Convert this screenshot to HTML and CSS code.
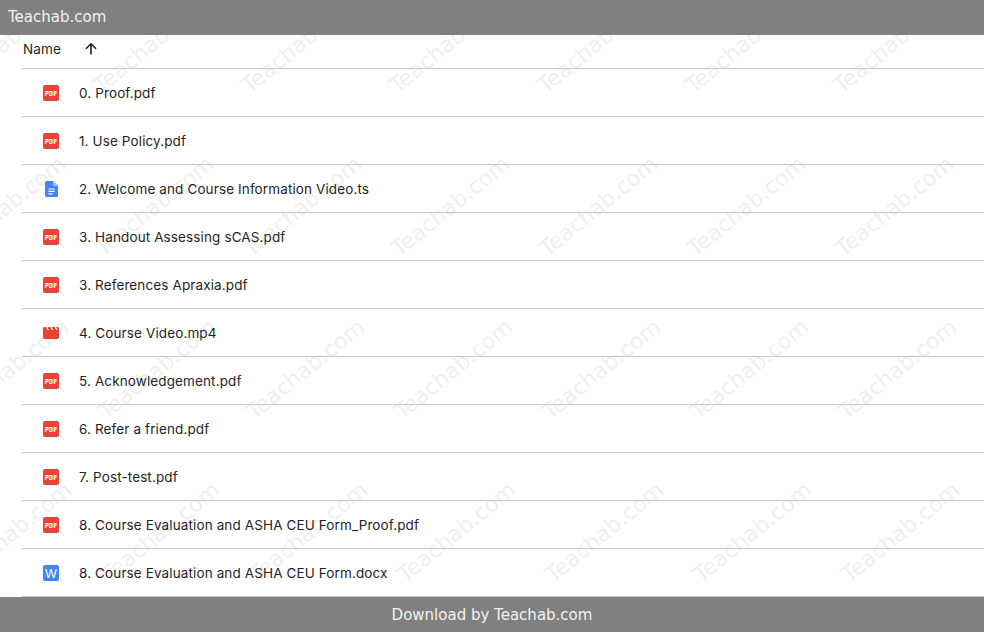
FILE: index.html
```html
<!DOCTYPE html>
<html lang="en">

<head>
    <meta charset="UTF-8">
    <meta name="viewport" content="width=device-width, initial-scale=1.0">
    <title>Teachab.com</title>
    <link rel="stylesheet" href="styles.css">
</head>

<body>

<div class="page">
    <div class="top-bar">Teachab.com</div>

    <div class="file-list">
        <!-- Watermark sits behind the rows -->
        <div class="watermarks">
            <div class="wm-row wm-row-a"><span>Teachab.com</span><span>Teachab.com</span><span>Teachab.com</span><span>Teachab.com</span><span>Teachab.com</span><span>Teachab.com</span><span>Teachab.com</span></div>
            <div class="wm-row wm-row-b"><span>Teachab.com</span><span>Teachab.com</span><span>Teachab.com</span><span>Teachab.com</span><span>Teachab.com</span><span>Teachab.com</span><span>Teachab.com</span></div>
            <div class="wm-row wm-row-c"><span>Teachab.com</span><span>Teachab.com</span><span>Teachab.com</span><span>Teachab.com</span><span>Teachab.com</span><span>Teachab.com</span><span>Teachab.com</span></div>
            <div class="wm-row wm-row-d"><span>Teachab.com</span><span>Teachab.com</span><span>Teachab.com</span><span>Teachab.com</span><span>Teachab.com</span><span>Teachab.com</span><span>Teachab.com</span></div>
        </div>

        <div class="list-head">
            <span>Name</span>
            <svg class="sort-arrow" viewBox="0 0 16 16"><path d="M8 13.500V2.800M3 7.800L8 2.800l5 5" fill="none" stroke="#1f1f1f" stroke-width="1.600"/></svg>
        </div>

        <div class="file-row">
            <svg class="file-icon" viewBox="0 0 16 16"><rect width="16" height="16" rx="2" fill="#ea4335"/><text x="1.800" y="10.600" textLength="12.400" lengthAdjust="spacingAndGlyphs" class="pdf-label">PDF</text></svg>
            <span>0. Proof.pdf</span>
        </div>
        <div class="file-row">
            <svg class="file-icon" viewBox="0 0 16 16"><rect width="16" height="16" rx="2" fill="#ea4335"/><text x="1.800" y="10.600" textLength="12.400" lengthAdjust="spacingAndGlyphs" class="pdf-label">PDF</text></svg>
            <span>1. Use Policy.pdf</span>
        </div>
        <div class="file-row">
            <svg class="file-icon" viewBox="0 0 16 16"><path d="M3.500 0H10l5 5v9.500a1.500 1.500 0 0 1-1.500 1.500h-10A1.500 1.500 0 0 1 2 14.500V1.500A1.500 1.500 0 0 1 3.500 0z" fill="#4285f4"/><path d="M10 0v4a1 1 0 0 0 1 1h4z" fill="#a1c2fa"/><path d="M5.500 8h6M5.500 10.400h6M5.500 12.800h4" stroke="#fff" stroke-width="1.200"/></svg>
            <span>2. Welcome and Course Information Video.ts</span>
        </div>
        <div class="file-row">
            <svg class="file-icon" viewBox="0 0 16 16"><rect width="16" height="16" rx="2" fill="#ea4335"/><text x="1.800" y="10.600" textLength="12.400" lengthAdjust="spacingAndGlyphs" class="pdf-label">PDF</text></svg>
            <span>3. Handout Assessing sCAS.pdf</span>
        </div>
        <div class="file-row">
            <svg class="file-icon" viewBox="0 0 16 16"><rect width="16" height="16" rx="2" fill="#ea4335"/><text x="1.800" y="10.600" textLength="12.400" lengthAdjust="spacingAndGlyphs" class="pdf-label">PDF</text></svg>
            <span>3. References Apraxia.pdf</span>
        </div>
        <div class="file-row">
            <svg class="file-icon" viewBox="0 0 16 16"><rect y="2" width="16" height="12" rx="1.500" fill="#ea4335"/><path d="M3 2h1.400l1.500 3H4.500zM7.300 2h1.400l1.500 3H8.800zM11.600 2H13l1.500 3h-1.400z" fill="#fff"/></svg>
            <span>4. Course Video.mp4</span>
        </div>
        <div class="file-row">
            <svg class="file-icon" viewBox="0 0 16 16"><rect width="16" height="16" rx="2" fill="#ea4335"/><text x="1.800" y="10.600" textLength="12.400" lengthAdjust="spacingAndGlyphs" class="pdf-label">PDF</text></svg>
            <span>5. Acknowledgement.pdf</span>
        </div>
        <div class="file-row">
            <svg class="file-icon" viewBox="0 0 16 16"><rect width="16" height="16" rx="2" fill="#ea4335"/><text x="1.800" y="10.600" textLength="12.400" lengthAdjust="spacingAndGlyphs" class="pdf-label">PDF</text></svg>
            <span>6. Refer a friend.pdf</span>
        </div>
        <div class="file-row">
            <svg class="file-icon" viewBox="0 0 16 16"><rect width="16" height="16" rx="2" fill="#ea4335"/><text x="1.800" y="10.600" textLength="12.400" lengthAdjust="spacingAndGlyphs" class="pdf-label">PDF</text></svg>
            <span>7. Post-test.pdf</span>
        </div>
        <div class="file-row">
            <svg class="file-icon" viewBox="0 0 16 16"><rect width="16" height="16" rx="2" fill="#ea4335"/><text x="1.800" y="10.600" textLength="12.400" lengthAdjust="spacingAndGlyphs" class="pdf-label">PDF</text></svg>
            <span>8. Course Evaluation and ASHA CEU Form_Proof.pdf</span>
        </div>
        <div class="file-row">
            <svg class="file-icon" viewBox="0 0 16 16"><rect width="16" height="16" rx="2" fill="#4285f4"/><text x="8" y="12.500" class="word-label">W</text></svg>
            <span>8. Course Evaluation and ASHA CEU Form.docx</span>
        </div>
    </div>

    <div class="bottom-bar">Download by Teachab.com</div>
</div>

</body>

</html>
```

FILE: styles.css
```css
html, body {
    margin: 0;
    height: 100%;
}

body {
    background-color: #fff;
    color: #1f1f1f;
    font-family: Inter, Roboto, sans-serif;
    overflow: hidden;
}

.page {
    display: flex;
    flex-direction: column;
    height: 632px;
}

.top-bar {
    background-color: #808080;
    color: #f2f2f2;
    font-family: 'DejaVu Sans', sans-serif;
    font-size: 15px;
    height: 35px;
    line-height: 35px;
    padding-left: 8px;
}

.file-list {
    position: relative;
    flex: 1;
    padding-left: 22px;
    overflow: hidden;
}

.watermarks {
    position: absolute;
    top: 0;
    left: 0;
    right: 0;
    bottom: 0;
    z-index: -1;
    color: #efefef;
    font-family: 'DejaVu Sans', sans-serif;
    font-size: 22px;
    line-height: 26px;
    white-space: nowrap;
}

.wm-row {
    display: flex;
    height: 163px;
}

.wm-row span {
    flex: 0 0 148px;
    min-width: 0;
    height: 26px;
    transform: rotate(-39deg);
    transform-origin: 0 100%;
}

.wm-row-a { margin: 38px 0 0 -43px; }
.wm-row-b { margin-left: -41px; }
.wm-row-c { margin-left: -38px; }
.wm-row-d { margin-left: -35px; }

.list-head {
    display: flex;
    align-items: center;
    height: 28px;
    padding-bottom: 5px;
    padding-left: 1px;
    border-bottom: 1px solid #c7c7c7;
    font-size: 13.5px;
    letter-spacing: 0.12px;
    gap: 22px;
}

.sort-arrow {
    width: 16px;
    height: 16px;
}

.file-row {
    display: flex;
    align-items: center;
    height: 47px;
    padding-left: 21px;
    border-bottom: 1px solid #c7c7c7;
    font-size: 13.5px;
    letter-spacing: 0.12px;
    gap: 20px;
}

.file-icon {
    width: 16px;
    height: 16px;
    flex-shrink: 0;
}

.pdf-label {
    fill: #fff;
    font-family: 'DejaVu Sans', sans-serif;
    font-size: 7px;
    font-weight: bold;
}

.word-label {
    fill: #fff;
    font-family: 'Liberation Sans', sans-serif;
    font-size: 12.500px;
    text-anchor: middle;
}

.bottom-bar {
    background-color: #808080;
    color: #f2f2f2;
    font-family: 'DejaVu Sans', sans-serif;
    font-size: 15px;
    height: 35px;
    line-height: 36px;
    text-align: center;
}
```
